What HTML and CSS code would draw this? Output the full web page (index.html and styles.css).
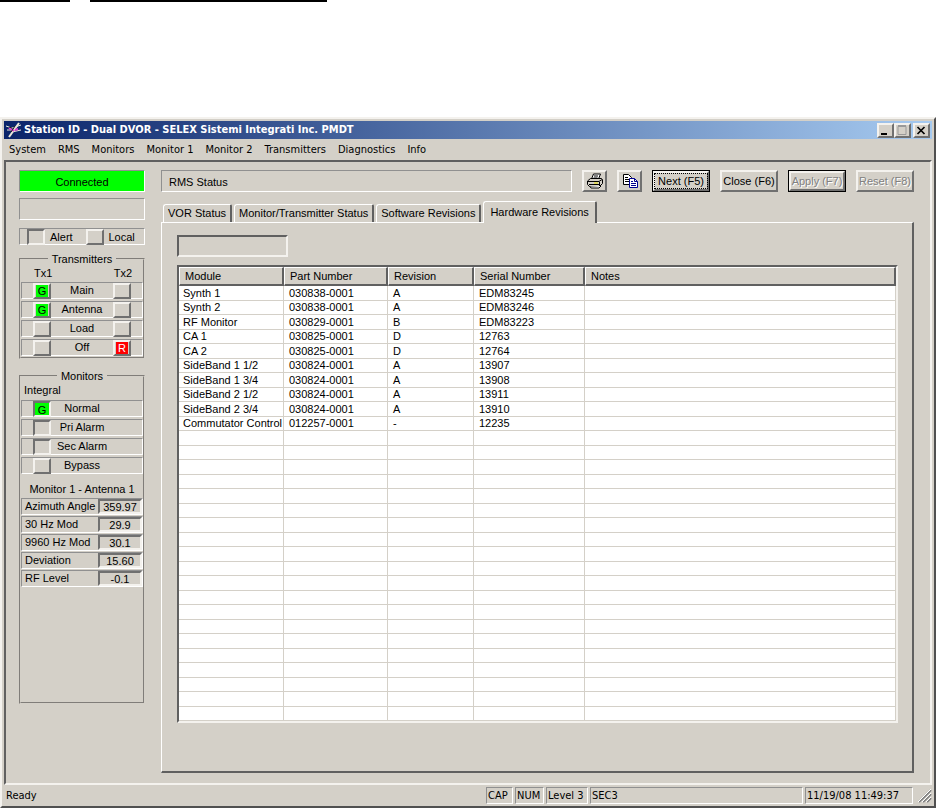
FILE: index.html
```html
<!DOCTYPE html>
<html lang="en">
<head>
  <meta charset="UTF-8">
  <meta name="viewport" content="width=device-width, initial-scale=1.0">
  <title>Station ID - Dual DVOR</title>
  <link rel="stylesheet" href="styles.css">
</head>
<body>
  <div class="page-rules">
    <span class="rule-short"></span>
    <span class="rule-long"></span>
  </div>

  <div class="window">
    <header class="title-bar">
      <svg class="app-icon" width="16" height="16" viewBox="0 0 16 16">
        <path d="M0 4l6 2 4-1M1 8l5 0M6 10l9-2M9 5l6-2" stroke="#ece9d8" fill="none"/>
        <path d="M13 1L3 15" stroke="#ece9d8" stroke-width="2"/>
        <path d="M3 6l5 3M9 8l3-1" stroke="#e040d0" stroke-width="2"/>
        <path d="M9 4l-4 6M3 5l3 1" stroke="#222"/>
      </svg>
      <h1>Station ID - Dual DVOR - SELEX Sistemi Integrati Inc. PMDT</h1>
      <div class="window-buttons">
        <button class="raised" aria-label="Minimize"><svg width="12" height="11" viewBox="0 0 12 11"><path d="M2 8h6v2H2z"/></svg></button>
        <button class="raised" aria-label="Maximize" disabled><svg width="12" height="11" viewBox="0 0 12 11"><path d="M2 1.500h8v8H2z" fill="none" stroke="#999" /><path d="M2 1h8" stroke="#999" stroke-width="2"/></svg></button>
        <button class="raised close" aria-label="Close"><svg width="12" height="11" viewBox="0 0 12 11"><path d="M2.500 2l7 7M9.500 2l-7 7" stroke="#000" stroke-width="1.700"/></svg></button>
      </div>
    </header>

    <nav class="menu">
      <a href="#">System</a>
      <a href="#">RMS</a>
      <a href="#">Monitors</a>
      <a href="#">Monitor 1</a>
      <a href="#">Monitor 2</a>
      <a href="#">Transmitters</a>
      <a href="#">Diagnostics</a>
      <a href="#">Info</a>
    </nav>

    <div class="client">
      <aside class="sidebar">
        <div class="sunken box connected">Connected</div>
        <div class="sunken box"></div>
        <div class="sunken alert-row">
          <span class="lamp off"></span><span class="alert-label">Alert</span>
          <button class="lamp raised" aria-label="Local"></button><span class="alert-label">Local</span>
        </div>

        <fieldset class="transmitters">
          <legend>Transmitters</legend>
          <div class="tx-head"><span>Tx1</span><span>Tx2</span></div>
          <div class="lamp-rows">
            <div class="sunken lamp-row"><button class="lamp raised"><b class="green">G</b></button><span>Main</span><button class="lamp raised" aria-label="Tx2 main"></button></div>
            <div class="sunken lamp-row"><button class="lamp raised"><b class="green">G</b></button><span>Antenna</span><button class="lamp raised" aria-label="Tx2 antenna"></button></div>
            <div class="sunken lamp-row"><button class="lamp raised" aria-label="Tx1 load"></button><span>Load</span><button class="lamp raised" aria-label="Tx2 load"></button></div>
            <div class="sunken lamp-row"><button class="lamp raised" aria-label="Tx1 off"></button><span>Off</span><button class="lamp raised"><b class="red">R</b></button></div>
          </div>
        </fieldset>

        <fieldset class="monitors">
          <legend>Monitors</legend>
          <div class="integral">Integral</div>
          <div class="lamp-rows">
            <div class="sunken lamp-row"><span class="lamp off green">G</span><span>Normal</span></div>
            <div class="sunken lamp-row"><span class="lamp off"></span><span>Pri Alarm</span></div>
            <div class="sunken lamp-row"><span class="lamp off"></span><span>Sec Alarm</span></div>
            <div class="sunken lamp-row"><button class="lamp raised" aria-label="Bypass"></button><span>Bypass</span></div>
          </div>
          <div class="readings-title">Monitor 1 - Antenna 1</div>
          <div class="readings">
            <div class="sunken reading"><span>Azimuth Angle</span><output>359.97</output></div>
            <div class="sunken reading"><span>30 Hz Mod</span><output>29.9</output></div>
            <div class="sunken reading"><span>9960 Hz Mod</span><output>30.1</output></div>
            <div class="sunken reading"><span>Deviation</span><output>15.60</output></div>
            <div class="sunken reading"><span>RF Level</span><output>-0.1</output></div>
          </div>
        </fieldset>
      </aside>

      <main>
        <div class="toolbar">
          <div class="sunken box status-title">RMS Status</div>
          <button class="raised tool" aria-label="Print">
            <svg width="18" height="16" viewBox="0 0 18 16">
              <path d="M5.500 6l2-5h7l-2 5" fill="#fff" stroke="#000"/>
              <path d="M8 3h4M7.500 5h4" stroke="#000"/>
              <path d="M1.500 8l3-2.500h11l1 1v4l-3 3h-10l-2-2z" fill="#d4d0c8" stroke="#000"/>
              <path d="M2 8.500h11l3-2M13.500 9v4M3 11.500h10" stroke="#000" fill="none"/>
              <path d="M8 10h4" stroke="#e8e000" stroke-width="1"/>
              <path d="M4 13.500l1 1.500h8l2-2" stroke="#000" fill="#fff"/>
            </svg>
          </button>
          <button class="raised tool" aria-label="Copy">
            <svg width="18" height="16" viewBox="0 0 18 16">
              <path d="M2.500 1.500h5l3 3v7h-8z" fill="#fff" stroke="#000"/>
              <path d="M4 4.500h3M4 6.500h4M4 8.500h4" stroke="#000"/>
              <path d="M8.500 5.500h5l3 3v6h-8z" fill="#fff" stroke="#000090"/>
              <path d="M13.500 5.500v3h3M10 8.500h2M10 10.500h5M10 12.500h5" stroke="#000090" fill="none"/>
            </svg>
          </button>
          <button class="raised action default"><span class="focus">Next (F5)</span></button>
          <button class="raised action">Close (F6)</button>
          <button class="raised action default" disabled>Apply (F7)</button>
          <button class="raised action" disabled>Reset (F8)</button>
        </div>

        <div class="tabs">
          <button class="tab">VOR Status</button>
          <button class="tab">Monitor/Transmitter Status</button>
          <button class="tab">Software Revisions</button>
          <button class="tab active">Hardware Revisions</button>
        </div>

        <section class="panel">
          <input class="filter" type="text" aria-label="Status" readonly>
          <div class="table-wrap">
            <table>
              <thead>
                <tr>
                  <th class="col-module">Module</th>
                  <th class="col-part">Part Number</th>
                  <th class="col-revision">Revision</th>
                  <th class="col-serial">Serial Number</th>
                  <th>Notes</th>
                </tr>
              </thead>
              <tbody id="revisions">
                <tr><td>Synth 1</td><td>030838-0001</td><td>A</td><td>EDM83245</td><td></td></tr>
                <tr><td>Synth 2</td><td>030838-0001</td><td>A</td><td>EDM83246</td><td></td></tr>
                <tr><td>RF Monitor</td><td>030829-0001</td><td>B</td><td>EDM83223</td><td></td></tr>
                <tr><td>CA 1</td><td>030825-0001</td><td>D</td><td>12763</td><td></td></tr>
                <tr><td>CA 2</td><td>030825-0001</td><td>D</td><td>12764</td><td></td></tr>
                <tr><td>SideBand 1 1/2</td><td>030824-0001</td><td>A</td><td>13907</td><td></td></tr>
                <tr><td>SideBand 1 3/4</td><td>030824-0001</td><td>A</td><td>13908</td><td></td></tr>
                <tr><td>SideBand 2 1/2</td><td>030824-0001</td><td>A</td><td>13911</td><td></td></tr>
                <tr><td>SideBand 2 3/4</td><td>030824-0001</td><td>A</td><td>13910</td><td></td></tr>
                <tr><td>Commutator Control</td><td>012257-0001</td><td>-</td><td>12235</td><td></td></tr>
              </tbody>
            </table>
          </div>
        </section>
      </main>
    </div>

    <footer class="status-bar">
      <span class="ready">Ready</span>
      <span class="pane pane-cap">CAP</span>
      <span class="pane pane-num">NUM</span>
      <span class="pane pane-level">Level 3</span>
      <span class="pane pane-sec">SEC3</span>
      <span class="pane pane-time">11/19/08 11:49:37</span>
      <svg class="grip" width="14" height="14" viewBox="0 0 14 14">
        <path d="M1 13L13 1M5 13l8-8M9 13l4-4" stroke="#808080" stroke-width="2"/>
        <path d="M0 13L13 0M4 13l9-9M8 13l5-5" stroke="#fff"/>
      </svg>
    </footer>
  </div>

  <script>
    // fill the rest of the grid with blank rows
    const revisions = document.getElementById("revisions");
    while (revisions.rows.length < 30) {
      const row = revisions.insertRow();
      for (let i = 0; i < 5; i++) {
        row.insertCell();
      }
    }
  </script>
</body>
</html>
```
FILE: styles.css
```css
* {
  box-sizing: border-box;
}

body {
  margin: 0;
  min-height: 100vh;
  display: flex;
  flex-direction: column;
  background: white;
  color: black;
  font: 11px/14px "Liberation Sans", Arial, sans-serif;
}

button, input {
  font: inherit;
  color: inherit;
  padding: 0;
  margin: 0;
  border-radius: 0;
}

/* Rules across the top of the page */
.page-rules {
  display: flex;
  gap: 20px;
  height: 117px;
}

.page-rules span {
  height: 2px;
  background: black;
}

.rule-short {
  width: 70px;
}

.rule-long {
  width: 237px;
}

/* Window frame */
.window {
  flex: 1;
  display: flex;
  flex-direction: column;
  background: #d4d0c8;
  padding: 2px 2px 0;
  border: 2px solid;
  border-color: #f4f2ee #505050 #505050 #f4f2ee;
}

.title-bar {
  display: flex;
  align-items: center;
  height: 18px;
  padding: 0 2px;
  background: linear-gradient(to right, #0a246a, #a6caf0);
  color: white;
}

.title-bar h1 {
  flex: 1;
  margin: 0 0 0 2px;
  font: bold 11px/18px "DejaVu Sans Condensed", "DejaVu Sans", sans-serif;
}

.window-buttons {
  display: flex;
}

.window-buttons button {
  width: 17px;
  height: 15px;
}

.window-buttons .close {
  margin-left: 2px;
}

.window-buttons svg {
  display: block;
}

.menu {
  display: flex;
  gap: 12px;
  height: 21px;
  padding: 0 5px;
  font: 11px/22px "DejaVu Sans Condensed", "DejaVu Sans", sans-serif;
}

.menu a {
  color: black;
  text-decoration: none;
}

/* Bevels */
.raised {
  background: #d4d0c8;
  border: 2px solid;
  border-color: #f4f2ee #707070 #707070 #f4f2ee;
}

.sunken {
  border: 1px solid;
  border-color: #909090 #fff #fff #909090;
}

.client {
  flex: 1;
  display: grid;
  grid-template-columns: 126px 1fr;
  gap: 16px;
  padding: 8px 16px 10px 13px;
  border: 2px solid;
  border-color: #606060 #f4f2ee #f4f2ee #606060;
}

/* Left column */
.box {
  height: 22px;
  line-height: 22px;
}

.sidebar .box {
  margin-bottom: 6px;
  text-align: center;
}

.connected {
  background: #00ff00;
}

.alert-row {
  display: flex;
  height: 17px;
  margin-top: 8px;
  padding-left: 7px;
}

.alert-label {
  flex: 1;
  padding-left: 5px;
  line-height: 17px;
}

.lamp {
  width: 18px;
  height: 16px;
  display: block;
  text-align: center;
  line-height: 14px;
}

.lamp.off {
  border: 2px solid;
  border-color: #707070 #f4f2ee #f4f2ee #707070;
}

.lamp b {
  display: block;
  width: 12px;
  height: 12px;
  margin: 0 auto;
  font-weight: normal;
  line-height: 12px;
}

.green {
  background: #00ff00;
}

.red {
  background: #ff0000;
  color: white;
}

fieldset {
  min-width: 0;
  margin: 0;
  padding: 0;
  border: 2px groove #d4d0c8;
}

legend {
  margin: 0 auto;
  padding: 0 4px;
  line-height: 14px;
}

.transmitters {
  height: 107px;
  margin-top: 7px;
}

.tx-head {
  display: flex;
  justify-content: space-between;
  padding: 0 11px 0 13px;
}

.lamp-rows {
  display: grid;
  gap: 2px;
  margin-top: 2px;
}

.lamp-row {
  display: grid;
  grid-template-columns: 18px 1fr 18px;
  height: 17px;
  padding: 0 11px;
  line-height: 15px;
  text-align: center;
}

.monitors {
  height: 335px;
  margin-top: 10px;
}

.integral {
  padding-left: 3px;
}

.monitors .lamp-rows {
  margin-top: 3px;
}

.readings-title {
  margin-top: 8px;
  text-align: center;
}

.readings {
  display: grid;
  gap: 1px;
  margin-top: 2px;
}

.reading {
  display: flex;
  justify-content: space-between;
  height: 17px;
  padding-left: 3px;
  line-height: 15px;
  white-space: nowrap;
}

.reading output {
  width: 44px;
  border: 2px solid;
  border-color: #707070 #f4f2ee #f4f2ee #707070;
  line-height: 13px;
  text-align: center;
}

/* Right side */
main {
  display: flex;
  flex-direction: column;
  min-width: 0;
}

.toolbar {
  display: flex;
  gap: 10px;
}

.status-title {
  flex: 1;
  padding-left: 7px;
}

.tool {
  width: 25px;
  height: 22px;
}

.tool svg {
  display: block;
  margin: 0 auto;
}

.action {
  width: 58px;
  height: 22px;
  line-height: 18px;
  white-space: nowrap;
}

.action.default {
  outline: 1px solid black;
  outline-offset: -1px;
  border-width: 3px;
  line-height: 14px;
}

.action:disabled {
  color: #808080;
  text-shadow: 1px 1px 0 white;
}

.focus {
  display: block;
  outline: 1px dotted black;
}

.tabs {
  display: flex;
  align-items: flex-end;
  gap: 2px;
  height: 30px;
  padding: 0 2px;
}

.tab {
  height: 18px;
  padding: 0 4px;
  background: #d4d0c8;
  border: 1px solid #fff;
  border-right: 2px solid #606060;
  border-bottom: 0;
  border-radius: 3px 2px 0 0;
  line-height: 17px;
}

.tab.active {
  position: relative;
  height: 22px;
  margin-bottom: -1px;
  padding: 0 6px;
}

.panel {
  flex: 1;
  display: flex;
  flex-direction: column;
  padding: 12px 14px 0 15px;
  border: 1px solid #fff;
  border-right: 2px solid #606060;
  border-bottom: 2px solid #606060;
}

.filter {
  width: 111px;
  height: 22px;
  background: #d4d0c8;
  border: 2px solid;
  border-color: #606060 #f4f2ee #f4f2ee #606060;
}

.table-wrap {
  margin-top: 8px;
  background: white;
  border: 2px solid;
  border-color: #606060 #f4f2ee #f4f2ee #606060;
}

table {
  width: 100%;
  table-layout: fixed;
  border-collapse: separate;
  border-spacing: 0;
}

th {
  height: 19px;
  padding: 0 0 0 5px;
  background: #d4d0c8;
  border: 1px solid #fff;
  border-right: 2px solid #606060;
  border-bottom: 2px solid #606060;
  font-weight: normal;
  line-height: 15px;
  text-align: left;
}

td {
  padding: 0 0 0 5px;
  border-right: 1px solid #d4d0c8;
  border-bottom: 1px solid #d4d0c8;
  line-height: 13px;
  height: 14px;
  white-space: nowrap;
}

td:first-child {
  padding-left: 4px;
}

tr:nth-child(odd) td {
  height: 15px;
}

.col-module {
  width: 105px;
}

.col-part {
  width: 104px;
}

.col-revision {
  width: 86px;
}

.col-serial {
  width: 111px;
}

/* Status bar */
.status-bar {
  display: flex;
  align-items: center;
  gap: 2px;
  height: 21px;
  font: 11px/16px "DejaVu Sans Condensed", "DejaVu Sans", sans-serif;
}

.ready {
  flex: 1;
  padding-left: 2px;
}

.pane {
  height: 17px;
  padding-left: 1px;
  border: 1px solid;
  border-color: #909090 #fff #fff #909090;
  white-space: nowrap;
}

.pane-cap {
  width: 27px;
}

.pane-num {
  width: 29px;
}

.pane-level {
  width: 42px;
}

.pane-sec {
  width: 213px;
}

.pane-time {
  width: 108px;
}

.grip {
  margin-left: 3px;
}
```
